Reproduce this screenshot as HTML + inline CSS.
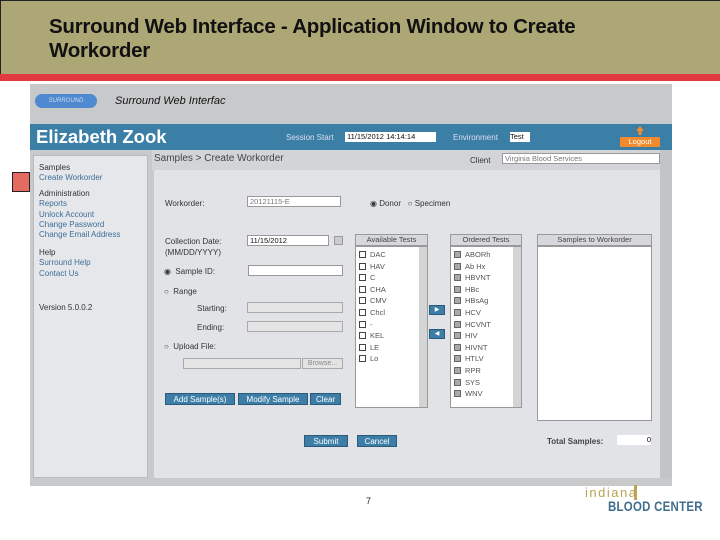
<!DOCTYPE html>
<html><head><style>
*{margin:0;padding:0;box-sizing:border-box}
body{width:720px;height:540px;background:#fff;position:relative;overflow:hidden;font-family:"Liberation Sans",sans-serif}
.a{position:absolute}
.t{font-size:8px;color:#333;white-space:nowrap}
.l{color:#3d6f99}
.btn{position:absolute;background:#3d7ea6;color:#fff;font-size:8px;text-align:center;line-height:11px;height:12px;border:1px solid #2b5a7a}
.inp{position:absolute;background:#fff;border:1px solid #999;height:11px}
.dis{position:absolute;background:#e4e4e4;border:1px solid #aaa;height:11px}
.cb{display:inline-block;width:7px;height:7px;border:1px solid #444;background:#fff;margin-right:4px;vertical-align:-1px}
.cbg{display:inline-block;width:7px;height:7px;border:1px solid #666;background:#aaa;margin-right:4px;vertical-align:-1px}
.list div{font-size:7.5px;color:#555;height:11.6px;line-height:11px;padding-left:3px;white-space:nowrap}
.hd{position:absolute;background:#d7d8dc;border:1px solid #999;font-size:7.5px;color:#444;text-align:center;line-height:10px;height:12px}
</style></head><body>
<div class="a" style="left:0;top:0;width:720px;height:74px;background:#ada675;border-top:1px solid #222;border-left:1px solid #222"></div>
<div class="a" style="left:49px;top:15px;font-size:20.5px;font-weight:bold;color:#111;line-height:24px;letter-spacing:-0.25px;white-space:nowrap">Surround Web Interface - Application Window to Create<br>Workorder</div>
<div class="a" style="left:0;top:74px;width:720px;height:7px;background:#e0393e"></div>
<div class="a" style="left:12px;top:172px;width:18px;height:20px;background:#e56a5f;border:1px solid #222"></div>

<div class="a" style="left:30px;top:84px;width:642px;height:402px;background:#c8c9cb"></div>
<div class="a" style="left:35px;top:94px;width:62px;height:14px;border-radius:7px;background:#4f8ad0;font-size:6px;color:#cde;text-align:center;line-height:14px;font-style:italic">SURROUND</div>
<div class="a" style="left:115px;top:95px;font-size:11px;font-style:italic;color:#111">Surround Web Interfac</div>
<div class="a" style="left:30px;top:124px;width:642px;height:26px;background:#3b7fa6"></div>
<div class="a" style="left:36px;top:126px;font-size:18.5px;font-weight:bold;color:#fff">Elizabeth Zook</div>
<div class="a t" style="left:286px;top:133px;color:#dde">Session Start</div>
<div class="a" style="left:345px;top:132px;width:91px;height:10px;background:#fff;font-size:7.5px;line-height:10px;padding-left:2px;color:#111">11/15/2012 14:14:14</div>
<div class="a t" style="left:453px;top:133px;color:#dde">Environment</div>
<div class="a" style="left:510px;top:132px;width:20px;height:10px;background:#fff;font-size:7.5px;line-height:10px;color:#111">Test</div>
<div class="a" style="left:636px;top:126px;width:8px;height:9px;background:#f08a2c;clip-path:polygon(50% 0,100% 55%,70% 55%,70% 100%,30% 100%,30% 55%,0 55%)"></div>
<div class="a" style="left:620px;top:137px;width:40px;height:10px;background:#f08a2c;color:#fff;font-size:7.5px;text-align:center;line-height:10px">Logout</div>

<div class="a" style="left:33px;top:155px;width:115px;height:323px;background:#e6e7ea;border:1px solid #bbb"></div>
<div class="a t" style="left:39px;top:163px;line-height:10px">Samples<br><span class="l">Create Workorder</span></div>
<div class="a t" style="left:39px;top:189px;line-height:10.3px">Administration<br><span class="l">Reports<br>Unlock Account<br>Change Password<br>Change Email Address</span></div>
<div class="a t" style="left:39px;top:248px;line-height:10.3px">Help<br><span class="l">Surround Help<br>Contact Us</span></div>
<div class="a t" style="left:39px;top:303px">Version 5.0.0.2</div>

<div class="a" style="left:152px;top:150px;width:508px;height:20px;background:#d2d4d8"></div>
<div class="a" style="left:154px;top:153px;font-size:10px;color:#444">Samples &gt; Create Workorder</div>
<div class="a t" style="left:470px;top:156px">Client</div>
<div class="inp" style="left:502px;top:153px;width:158px;font-size:7.5px;color:#777;line-height:9px;padding-left:2px">Virginia Blood Services</div>
<div class="a" style="left:154px;top:170px;width:506px;height:308px;background:#e1e3e7"></div>
<div class="a" style="left:660px;top:150px;width:12px;height:328px;background:#c3c4c8"></div>

<div class="a t" style="left:165px;top:199px">Workorder:</div>
<div class="inp" style="left:247px;top:196px;width:94px;font-size:7.5px;color:#777;line-height:9px;padding-left:2px">20121115-E</div>
<div class="a t" style="left:370px;top:199px">&#9673; Donor &nbsp; &#9675; Specimen</div>
<div class="a t" style="left:165px;top:236px;line-height:11px">Collection Date:<br>(MM/DD/YYYY)</div>
<div class="inp" style="left:247px;top:235px;width:82px;font-size:7.5px;line-height:9px;padding-left:2px;color:#111">11/15/2012</div>
<div class="a" style="left:334px;top:236px;width:9px;height:9px;background:#ccc;border:1px solid #999"></div>
<div class="a t" style="left:164px;top:267px">&#9673; &nbsp;Sample ID:</div>
<div class="inp" style="left:248px;top:265px;width:95px"></div>
<div class="a t" style="left:164px;top:287px">&#9675; &nbsp;Range</div>
<div class="a t" style="left:197px;top:304px">Starting:</div>
<div class="dis" style="left:247px;top:302px;width:96px"></div>
<div class="a t" style="left:197px;top:323px">Ending:</div>
<div class="dis" style="left:247px;top:321px;width:96px"></div>
<div class="a t" style="left:164px;top:342px">&#9675; &nbsp;Upload File:</div>
<div class="dis" style="left:183px;top:358px;width:118px"></div>
<div class="dis" style="left:302px;top:358px;width:41px;font-size:7px;color:#888;text-align:center;line-height:9px">Browse...</div>
<div class="btn" style="left:165px;top:393px;width:70px">Add Sample(s)</div>
<div class="btn" style="left:238px;top:393px;width:70px">Modify Sample</div>
<div class="btn" style="left:310px;top:393px;width:31px">Clear</div>
<div class="btn" style="left:304px;top:435px;width:44px">Submit</div>
<div class="btn" style="left:357px;top:435px;width:40px">Cancel</div>

<div class="hd" style="left:355px;top:234px;width:73px">Available Tests</div>
<div class="a list" style="left:355px;top:246px;width:73px;height:162px;background:#fff;border:1px solid #999;padding-top:2px">
<div><span class="cb"></span>DAC</div><div><span class="cb"></span>HAV</div><div><span class="cb"></span>C</div><div><span class="cb"></span>CHA</div><div><span class="cb"></span>CMV</div><div><span class="cb"></span>Chcl</div><div><span class="cb"></span>-</div><div><span class="cb"></span>KEL</div><div><span class="cb"></span>LE</div><div><span class="cb"></span>Lo</div></div>
<div class="a" style="left:419px;top:247px;width:8px;height:160px;background:#d4d4d4"></div>
<div class="btn" style="left:429px;top:305px;width:16px;height:10px;font-size:6px;line-height:8px">&#9654;</div>
<div class="btn" style="left:429px;top:329px;width:16px;height:10px;font-size:6px;line-height:8px">&#9664;</div>
<div class="hd" style="left:450px;top:234px;width:72px">Ordered Tests</div>
<div class="a list" style="left:450px;top:246px;width:72px;height:162px;background:#fff;border:1px solid #999;padding-top:2px">
<div><span class="cbg"></span>ABORh</div><div><span class="cbg"></span>Ab Hx</div><div><span class="cbg"></span>HBVNT</div><div><span class="cbg"></span>HBc</div><div><span class="cbg"></span>HBsAg</div><div><span class="cbg"></span>HCV</div><div><span class="cbg"></span>HCVNT</div><div><span class="cbg"></span>HIV</div><div><span class="cbg"></span>HIVNT</div><div><span class="cbg"></span>HTLV</div><div><span class="cbg"></span>RPR</div><div><span class="cbg"></span>SYS</div><div><span class="cbg"></span>WNV</div></div>
<div class="a" style="left:513px;top:247px;width:8px;height:160px;background:#d4d4d4"></div>
<div class="hd" style="left:537px;top:234px;width:115px">Samples to Workorder</div>
<div class="a" style="left:537px;top:246px;width:115px;height:175px;background:#fff;border:1px solid #999"></div>
<div class="a t" style="left:547px;top:437px;font-weight:bold;color:#444">Total Samples:</div>
<div class="a" style="left:617px;top:435px;width:34px;height:10px;background:#fff;font-size:7.5px;text-align:right;line-height:10px">0</div>

<div class="a" style="left:366px;top:496px;font-size:9px;color:#222">7</div>
<div class="a" style="left:585px;top:485px;font-size:13px;color:#b9a553;letter-spacing:1.5px">indiana</div>
<div class="a" style="left:634px;top:485px;width:3px;height:15px;background:#b9a553"></div>
<div class="a" style="left:608px;top:498px;font-size:14px;font-weight:bold;color:#3f6e8c;letter-spacing:0.3px;white-space:nowrap;transform:scaleX(0.82);transform-origin:left">BLOOD CENTER</div>
</body></html>
